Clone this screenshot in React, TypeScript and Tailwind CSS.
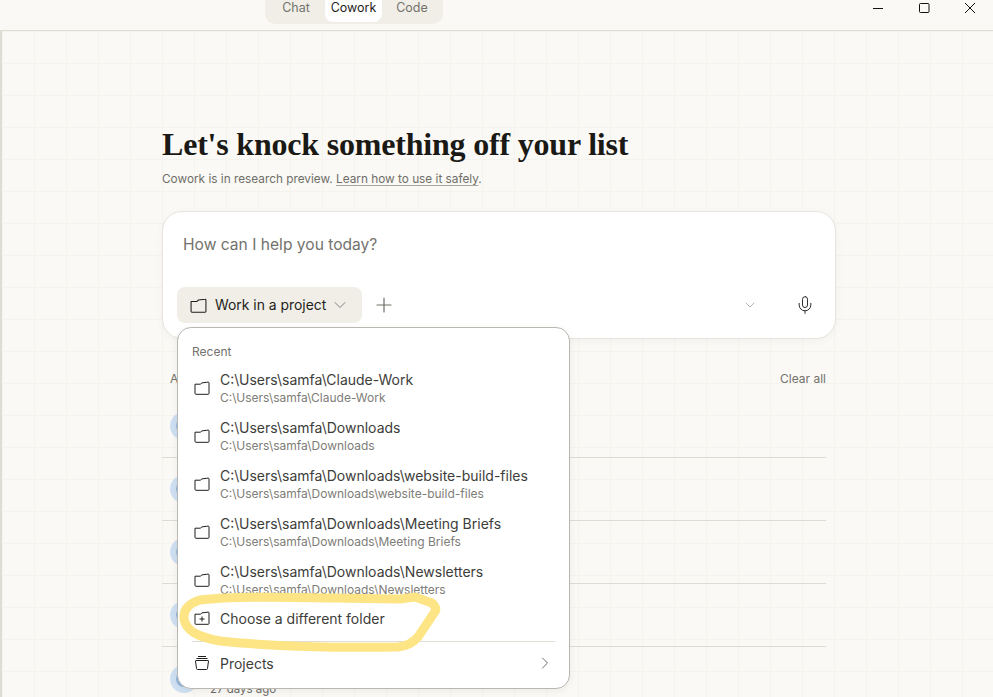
import { ChevronDown, ChevronRight, Mic, Plus } from "lucide-react";

const recent = [
    "C:\\Users\\samfa\\Claude-Work",
    "C:\\Users\\samfa\\Downloads",
    "C:\\Users\\samfa\\Downloads\\website-build-files",
    "C:\\Users\\samfa\\Downloads\\Meeting Briefs",
    "C:\\Users\\samfa\\Downloads\\Newsletters",
];

const FolderIcon = ({ plus = false, size = 16 }: { plus?: boolean; size?: number }) => (
    <svg width={size} height={size} viewBox="0 0 16 16" fill="none" stroke="#1f1e1b" strokeWidth="1" className="shrink-0">
        <path d="M1 4.2v9.3c0 .5.3.8.8.8h12.4c.5 0 .8-.3.8-.8V2.8c0-.5-.3-.8-.8-.7l-6.4.8-1.2 1.3H1z" strokeLinejoin="round" />
        {plus && <path d="M8 6.5v5M5.5 9h5" />}
    </svg>
);

const ProjectsIcon = () => (
    <svg width="16" height="16" viewBox="0 0 16 16" fill="none" stroke="#1f1e1b" strokeWidth="1" className="shrink-0">
        <path d="M4 1.5h8M2.5 3.5h11" />
        <path d="M1.5 6c0-.5.3-.5.6-.5h11.8c.3 0 .6 0 .6.5l-1 7.5c0 .6-.4 1-1 1H3.5c-.6 0-1-.4-1-1z" strokeLinejoin="round" />
    </svg>
);

const TaskRow = ({ last = false }: { last?: boolean }) => (
    <div className={`h-[63px] flex items-center gap-[12px] pl-2 shrink-0 ${last ? "" : "border-b border-[#dedcd5]"}`}>
        <div className="w-7 h-7 rounded-full bg-[#cfe0f3] flex items-center justify-center shrink-0">
            <div className="w-4 h-4 rounded-full bg-[#8fb4de]" />
        </div>
        {last && <div className="pt-[22px] text-[11.5px] text-[#6f6e69]">27 days ago</div>}
    </div>
);

export default function App() {
    return (
        <div className="h-[697px] w-[993px] overflow-hidden bg-[#faf9f5] font-['Inter','Liberation_Sans',sans-serif] flex flex-col">
            {/* barre du haut */}
            <div className="h-[31px] shrink-0 border-b-[1px] border-[#dedcd4] flex items-start relative">
                <div className="ml-[265px] h-[24px] w-[178px] bg-[#f0eee7] rounded-b-[10px] flex text-[12.5px] leading-[15px] text-[#73726c]">
                    <div className="w-[60px] pl-[2px] text-center">Chat</div>
                    <div className="w-[57px] h-[22px] bg-white rounded-b-[8px] text-center text-[#1f1e1b]">Cowork</div>
                    <div className="w-[60px] text-center">Code</div>
                </div>
                <div className="ml-auto flex items-center gap-[32px] pr-[17px] pt-[1px] h-[15px]">
                    <svg width="14" height="13" viewBox="0 0 14 13" stroke="#111"><path d="M0 6.5h10" /></svg>
                    <svg width="13" height="13" viewBox="0 0 13 13" fill="none" stroke="#111"><rect x="0.5" y="1.5" width="9.5" height="9" rx="1" /></svg>
                    <svg width="12" height="12" viewBox="0 0 12 12" stroke="#111"><path d="M1 1l10 10M11 1L1 11" /></svg>
                </div>
            </div>

            <div className="flex-1 min-h-0 border-l-[2px] border-[#dedcd4] bg-[linear-gradient(#f4f3ee_1px,transparent_1px),linear-gradient(90deg,#f4f3ee_1px,transparent_1px)] bg-[size:32px_32px] pl-[160px] pr-[157px] pt-[95px]">
                <h1 className="font-['Liberation_Serif',serif] font-bold text-[32px] leading-[36px] text-[#1a1915] tracking-[-0.2px]">
                    Let's knock something off your list
                </h1>
                <p className="mt-[8px] text-[11.8px] leading-[18px] text-[#6f6e69]">
                    Cowork is in research preview.{" "}
                    <span className="underline underline-offset-2 decoration-[#a8a6a0]">Learn how to use it safely</span>.
                </p>

                <div className="relative mt-[23px]">
                    {/* carte de saisie */}
                    <div className="h-[128px] bg-white rounded-[20px] border border-[#e6e4dd] shadow-[0_2px_10px_rgba(0,0,0,0.035)] flex flex-col justify-between pb-[15px] pl-[14px] pr-[20px] pt-[23px]">
                        <div className="pl-[6px] text-[15.6px] leading-[20px] text-[#73726c]">How can I help you today?</div>
                        <div className="flex items-center">
                            <div className="h-[36px] w-[185px] bg-[#f0eee7] rounded-[8px] flex items-center pl-[13px] gap-[8px] text-[13.9px] text-[#1f1e1b]">
                                <FolderIcon size={17} />
                                <span>Work in a project</span>
                                <ChevronDown size={20} strokeWidth={1} className="ml-[-4px] text-[#6f6e69]" />
                            </div>
                            <Plus size={24} strokeWidth={1.2} className="ml-[10px] text-[#6f6e69]" />
                            <ChevronDown size={16} strokeWidth={1} className="ml-auto text-[#8c8b85]" />
                            <Mic size={20} strokeWidth={1.1} className="ml-[37px] text-[#1f1e1b]" />
                        </div>
                    </div>

                    {/* liste des taches derriere le menu */}
                    <div className="flex items-center justify-between pl-2 pr-[10px] pt-[32px] pb-[8px] text-[12px] leading-[16px] text-[#73726c]">
                        <span>All tasks</span>
                        <span>Clear all</span>
                    </div>
                    <div className="flex flex-col pr-[10px]">
                        <TaskRow />
                        <TaskRow />
                        <TaskRow />
                        <TaskRow />
                        <TaskRow last />
                    </div>

                    {/* menu */}
                    <div className="absolute left-[15px] top-[116px] w-[393px] h-[362px] bg-white rounded-[14px] border border-[#b9b7b0] shadow-[0_2px_8px_rgba(0,0,0,0.06)] pt-[16px] px-[14px] z-10">
                        <div className="text-[12px] leading-[16px] text-[#73726c]">Recent</div>
                        <div className="pt-[4px]">
                            {recent.map((path) => (
                                <div key={path} className="h-[48px] flex items-center gap-[10px] pl-[2px]">
                                    <FolderIcon />
                                    <div className="flex flex-col">
                                        <span className="text-[14px] leading-[18px] text-[#3d3d3a]">{path}</span>
                                        <span className="mt-[1px] text-[12px] leading-[15px] text-[#7e7d77]">{path}</span>
                                    </div>
                                </div>
                            ))}
                        </div>
                        <div className="h-[28px] flex items-center gap-[10px] pl-[2px] text-[14px] text-[#3d3d3a]">
                            <FolderIcon plus />
                            <span>Choose a different folder</span>
                        </div>
                        <div className="mt-[9px] border-b border-[#dedcd5]" />
                        <div className="h-[42px] flex items-center gap-[10px] pl-[2px] text-[14px] text-[#3d3d3a]">
                            <ProjectsIcon />
                            <span>Projects</span>
                            <ChevronRight size={20} strokeWidth={1} className="ml-auto text-[#55544f]" />
                        </div>
                    </div>

                    {/* trait jaune par dessus */}
                    <svg width="270" height="70" viewBox="0 0 270 70" fill="none" className="absolute left-[16px] top-[378px] z-20 pointer-events-none">
                        <path
                            d="M22 11C60 6 130 9 222 10L237 8L254 14Q260 20 256 24L240 48Q232 57 220 58C160 59 90 57 42 52C20 48 8 42 6 30C5 20 12 14 22 11z"
                            stroke="#fde585"
                            strokeWidth="9"
                            strokeLinejoin="round"
                        />
                    </svg>
                </div>
            </div>
        </div>
    );
}
